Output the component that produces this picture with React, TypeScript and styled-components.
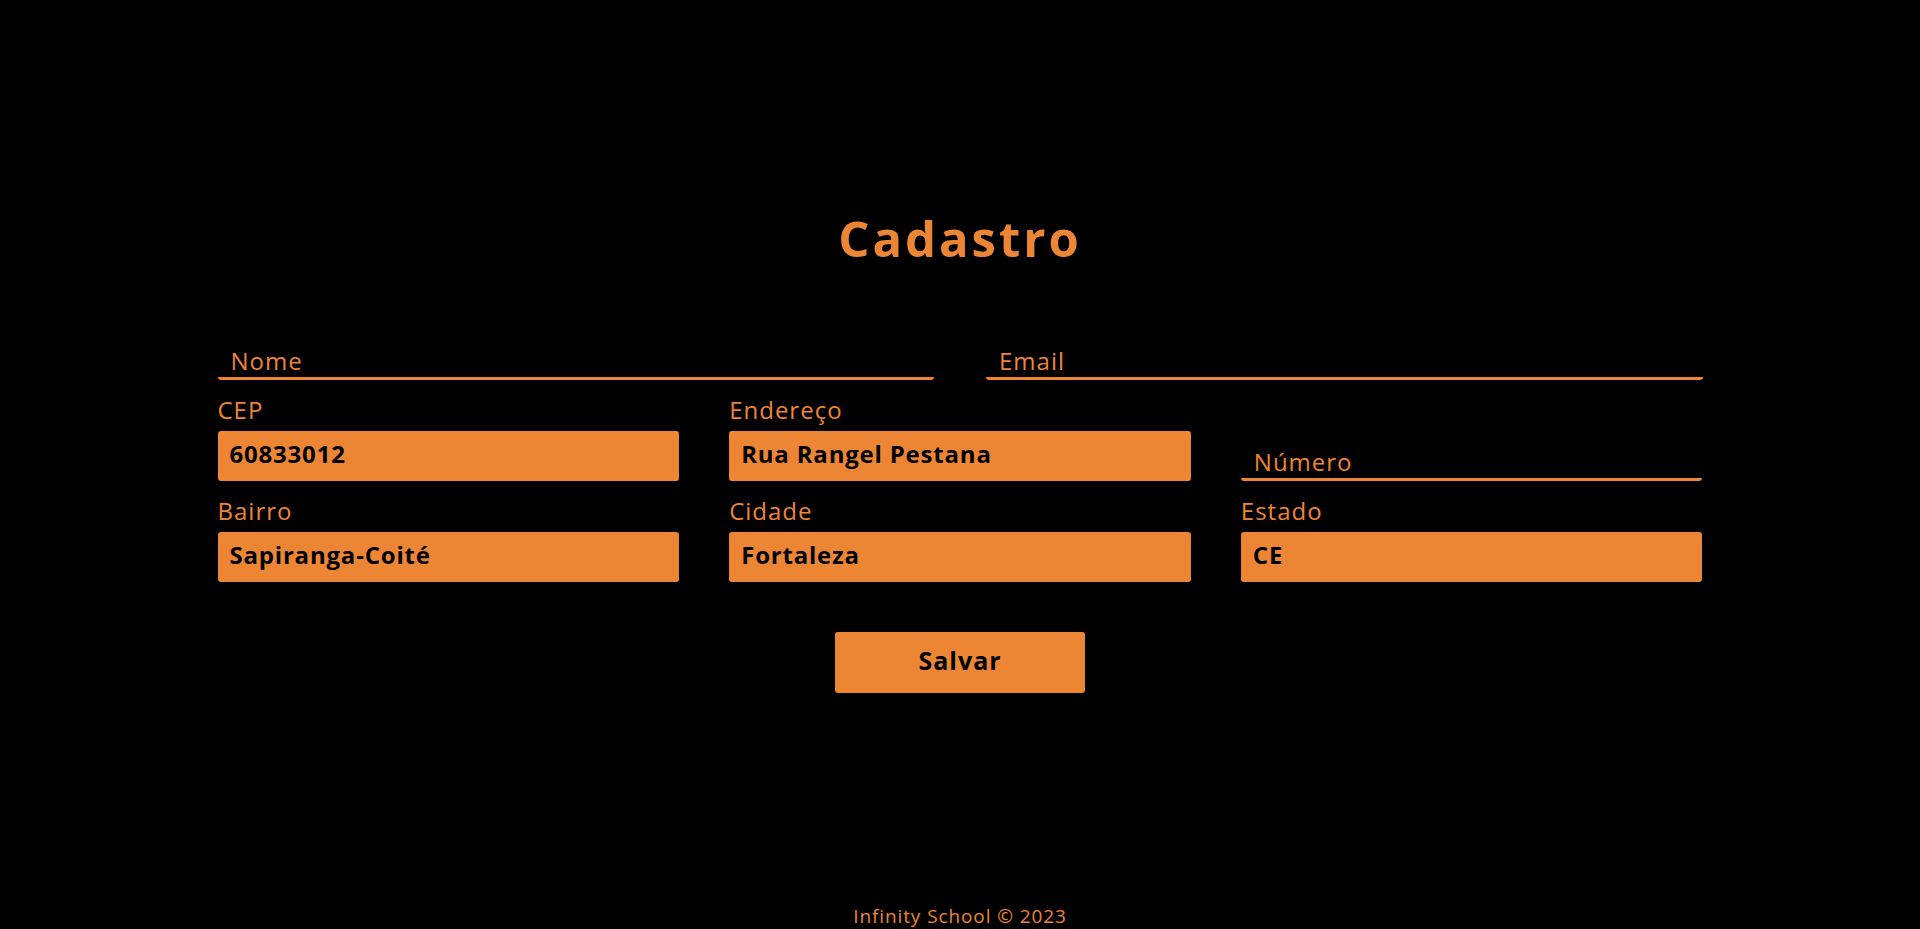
import React from "react";
import styled, { createGlobalStyle } from "styled-components";

const ORANGE = "#ed8634";

const GlobalStyle = createGlobalStyle`
  html, body {
    margin: 0;
    padding: 0;
    background: #000;
  }
  body {
    font-family: "Open Sans", "Liberation Sans", sans-serif;
  }
  * { box-sizing: border-box; }
`;

const Page = styled.div`
  min-height: 100vh;
  display: flex;
  flex-direction: column;
  align-items: center;
  background: #000;
`;

const Main = styled.main`
  width: 1485px;
  padding-top: 202px;
  display: flex;
  flex-direction: column;
  align-items: center;
`;

const Title = styled.h1`
  margin: 0;
  font-size: 49px;
  line-height: 72px;
  font-weight: 700;
  letter-spacing: 3px;
  color: ${ORANGE};
`;

const Form = styled.form`
  width: 100%;
  margin-top: 67px;
  display: flex;
  flex-direction: column;
  gap: 13px;
`;

const Row = styled.div<{ $cols: number; $gap: number }>`
  display: grid;
  grid-template-columns: repeat(${(p) => p.$cols}, 1fr);
  column-gap: ${(p) => p.$gap}px;
`;

const Field = styled.div`
  display: flex;
  flex-direction: column;
  gap: 4px;
  min-width: 0;
`;

const Label = styled.label`
  font-size: 24px;
  line-height: 33px;
  color: ${ORANGE};
  font-weight: 400;
  letter-spacing: 1px;
`;

const LineInput = styled.input<{ $alignEnd?: boolean }>`
  width: 100%;
  height: 39px;
  padding: 2px 13px 0;
  border: none;
  border-bottom: 3px solid ${ORANGE};
  border-radius: 3px;
  background: transparent;
  color: ${ORANGE};
  font-family: inherit;
  font-size: 24px;
  letter-spacing: 1px;
  outline: none;
  align-self: ${(p) => (p.$alignEnd ? "end" : "auto")};
  &::placeholder {
    color: ${ORANGE};
    opacity: 1;
  }
`;

const BoxInput = styled.input`
  width: 100%;
  height: 50px;
  margin-top: 1px;
  padding: 0 12px 5px;
  border: none;
  border-radius: 3px;
  background: ${ORANGE};
  color: #000;
  font-family: inherit;
  font-size: 24px;
  font-weight: 700;
  letter-spacing: 0.8px;
  outline: none;
  caret-color: #000;
`;

const ButtonRow = styled.div`
  display: flex;
  justify-content: center;
  margin-top: 37px;
`;

const SaveButton = styled.button`
  width: 250px;
  height: 61px;
  padding: 0 0 5px;
  border: none;
  border-radius: 3px;
  background: ${ORANGE};
  color: #000;
  font-family: inherit;
  font-size: 25px;
  font-weight: 700;
  letter-spacing: 1px;
  cursor: pointer;
`;

const Footer = styled.footer`
  margin-top: auto;
  font-size: 19px;
  line-height: 26px;
  letter-spacing: 0.9px;
  color: ${ORANGE};
  text-align: center;
`;

type BoxFieldProps = { label: string; value: string; autoFocus?: boolean };

function BoxField({ label, value, autoFocus }: BoxFieldProps) {
  const id = "f-" + label;
  return (
    <Field>
      <Label htmlFor={id}>{label}</Label>
      <BoxInput id={id} defaultValue={value} autoFocus={autoFocus} />
    </Field>
  );
}

export default function App() {
  return (
    <>
      <GlobalStyle />
      <Page>
        <Main>
          <Title>Cadastro</Title>
          <Form onSubmit={(e) => e.preventDefault()}>
            <Row $cols={2} $gap={52}>
              <LineInput placeholder="Nome" />
              <LineInput placeholder="Email" />
            </Row>
            <Row $cols={3} $gap={50}>
              <BoxField label="CEP" value="60833012" />
              <BoxField label="Endereço" value="Rua Rangel Pestana" autoFocus />
              <LineInput placeholder="Número" $alignEnd />
            </Row>
            <Row $cols={3} $gap={50}>
              <BoxField label="Bairro" value="Sapiranga-Coité" />
              <BoxField label="Cidade" value="Fortaleza" />
              <BoxField label="Estado" value="CE" />
            </Row>
            <ButtonRow>
              <SaveButton type="submit">Salvar</SaveButton>
            </ButtonRow>
          </Form>
        </Main>
        <Footer>Infinity School © 2023</Footer>
      </Page>
    </>
  );
}
